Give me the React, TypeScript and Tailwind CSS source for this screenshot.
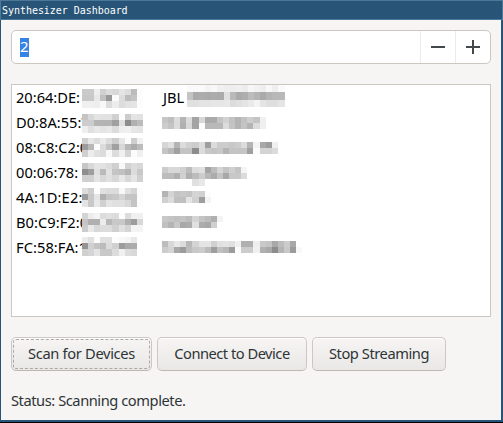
import React from "react";

type Mosaic = { left: number; top: number; rows: string[]; cell?: number };
type Device = { mac: string; name: string; tracking: string; macMask: Mosaic; nameMask: Mosaic };

const devices: Device[] = [
  {
    mac: "20:64:DE:",
    name: "JBL",
    tracking: "tracking-[-0.02px]",
    macMask: { left: 70, top: 4, rows: ["cacaeed0dcd8e4dcbcfc", "c8c8e8c098fadcbcc4fc", "f0f0eef8dcecdce2e4fc"] },
    nameMask: { left: 175, top: 0, cell: 7.4, rows: ["fafafaf4f8f0eeeef0ecf6f2eef8eefa", "c4aaacaaacaae0baaaaebcb4aab4b8b8", "e0e0e4e4e6e6e8dce0e4eaf4e4dedee4"] },
  },
  {
    mac: "D0:8A:55:T",
    name: "",
    tracking: "tracking-[0px]",
    macMask: { left: 70, top: 4, rows: ["c4d8e4e2e2d0fccce4e2", "ccccb4b4b4a0e08cb0bc", "eee0e8e4e8dceef0e6e4"] },
    nameMask: { left: 150, top: 7, rows: ["c6bedcb4dca4d8aaaac4d2c2b4c2cec4f0", "ccc4dcb0d8a4fcb8b8b8dcc4b4c4b4dcf0"] },
  },
  {
    mac: "08:C8:C2:0",
    name: "",
    tracking: "tracking-[0px]",
    macMask: { left: 70, top: 3, rows: ["d0e6dceadccce6fccef0dc", "9cb8fcdcc4a0d8b8acbc", "d0ece0dcf8dcf0d4fcf0"].map((r) => r.slice(0, 20)) },
    nameMask: { left: 150, top: 7, rows: ["d6e0b4dcd0ccdc9edcccccc8ccdcb4f4a89cf0", "c4b8a0c4c48cdcc8c4c8b4c4c4c4a0fcd4d4dc"] },
  },
  {
    mac: "00:06:78:",
    name: "",
    tracking: "tracking-[0px]",
    macMask: { left: 70, top: 3, rows: ["c6d8e4e2dcd0f8d2dcd8", "8e9ee0bae2c4c0b4dcc8", "d0d0e4d8e0d8e8d8e4d0"] },
    nameMask: { left: 150, top: 7, rows: ["ccd8d8d0bcdce0a4bcd4c4d0c4f4", "bcbcb0d0b0bcccb8acc4a8c8c8dc", "ffffffffffe0e8ffffffffffffff"] },
  },
  {
    mac: "4A:1D:E2:A",
    name: "",
    tracking: "tracking-[0.15px]",
    macMask: { left: 70, top: 3, rows: ["dccefce0dcdcf8e0d4fc", "9cc8e4b0c4c8d4c4c4fc", "e4c8e8d0e4e0e0d8c4fc"] },
    nameMask: { left: 150, top: 6, rows: ["b4d4c4c8c4d4d0fc", "d0dcc0c0e4d09ef4"] },
  },
  {
    mac: "B0:C9:F2:0",
    name: "",
    tracking: "tracking-[0.05px]",
    macMask: { left: 70, top: 3, rows: ["d4ecf4dce0dcfcdcf0f0", "c4b0b0ecb8c8c8b09cd8", "cce8d8dcdcd0e0d4f4f4"] },
    nameMask: { left: 150, top: 6, rows: ["c8c4c0c4bcd4c4bcb0f4", "c0b4c8a8ace0aca8d0ff"] },
  },
  {
    mac: "FC:58:FA:1",
    name: "",
    tracking: "tracking-[0.05px]",
    macMask: { left: 70, top: 2, rows: ["ece0fce0e0fcf8f4e8", "94d0c4bcdcd09caaac", "d0d4e4c8c8dcf0dcd8"] },
    nameMask: {
      left: 150,
      top: 6,
      rows: ["bcd8e8dcb8d4e4e4d0e0e4e0f0b0b0eec8c4a8bccca8ff", "ccd4a89cbcc8ccbc9ec0b89cfcccccf0b0a88cb4c89cf8"],
    },
  },
];

function Pixels({ left, top, rows, cell = 6.2 }: Mosaic) {
  return (
    <div className="absolute" style={{ left, top }}>
      {rows.map((row, y) => (
        <div key={y} className="flex" style={{ height: cell }}>
          {(row.match(/../g) ?? []).map((g, x) => (
            <i key={x} className="h-full w-[6.1px] shrink-0" style={{ backgroundColor: `#${g}${g}${g}` }} />
          ))}
        </div>
      ))}
    </div>
  );
}

function Button({ label, className, focused }: { label: string; className: string; focused?: boolean }) {
  return (
    <button
      className={`relative flex h-[34px] items-center justify-center rounded-[5px] border border-[#cdc7c2] border-b-[#bfb8b1] bg-linear-to-b from-[#f6f5f3] to-[#e9e8e6] pb-[2px] whitespace-nowrap shadow-[inset_0_1px_#ffffff] ${className}`}
    >
      {focused && <span className="absolute inset-[1px] rounded-[3px] border border-dashed border-[#aaa9a7]" />}
      <span>{label}</span>
    </button>
  );
}

export default function App() {
  return (
    <div className="flex h-[423px] w-[503px] flex-col overflow-hidden border-b border-black bg-[#285577] font-['Noto_Sans',sans-serif] text-[14.67px] text-[#2e3436]">
      <header className="flex h-5 shrink-0 items-center border border-[#4c7899] pl-px font-['DejaVu_Sans_Mono',monospace] text-[10px] tracking-[-0.04px] text-white">
        Synthesizer Dashboard
      </header>
      <main className="mr-[2px] mb-[2px] ml-px flex flex-1 flex-col bg-[#f6f5f4] px-[10px] pt-[10px]">
        <div className="flex h-[34px] w-[480px] shrink-0 items-stretch rounded-[5px] border border-[#cdc7c2] bg-white">
          <div className="flex flex-1 items-center pl-2">
            <span className="flex h-[19px] w-[9px] items-center bg-[#3584e4] pb-px text-[15px] text-white">2</span>
          </div>
          <div className="flex w-[35px] items-center justify-center border-l border-[#ebebea]">
            <svg width="14" height="14" shapeRendering="crispEdges" fill="#43494b"><path d="M0 6h14v2H0z" /></svg>
          </div>
          <div className="flex w-[35px] items-center justify-center border-l border-[#ebebea]">
            <svg width="14" height="14" shapeRendering="crispEdges" fill="#43494b"><path d="M0 6h14v2H0zM6 0h2v14H6z" /></svg>
          </div>
        </div>
        <div className="mt-5 h-[233px] w-[480px] shrink-0 border border-[#cdc7c2] bg-white text-black">
          {devices.map((d) => (
            <div key={d.mac} className="relative flex h-[25px] items-center pl-1 leading-[25px]">
              <span className={`w-[147px] ${d.tracking}`}>{d.mac}</span>
              <span>{d.name}</span>
              <Pixels {...d.macMask} />
              <Pixels {...d.nameMask} />
            </div>
          ))}
        </div>
        <div className="mt-5 flex gap-[5px]">
          <Button label="Scan for Devices" className="w-[141px] tracking-[-0.33px]" focused />
          <Button label="Connect to Device" className="w-[150px] tracking-[-0.5px]" />
          <Button label="Stop Streaming" className="w-[134px] tracking-[-0.43px]" />
        </div>
        <p className="mt-[19px] leading-5 tracking-[-0.44px]">Status: Scanning complete.</p>
      </main>
    </div>
  );
}
